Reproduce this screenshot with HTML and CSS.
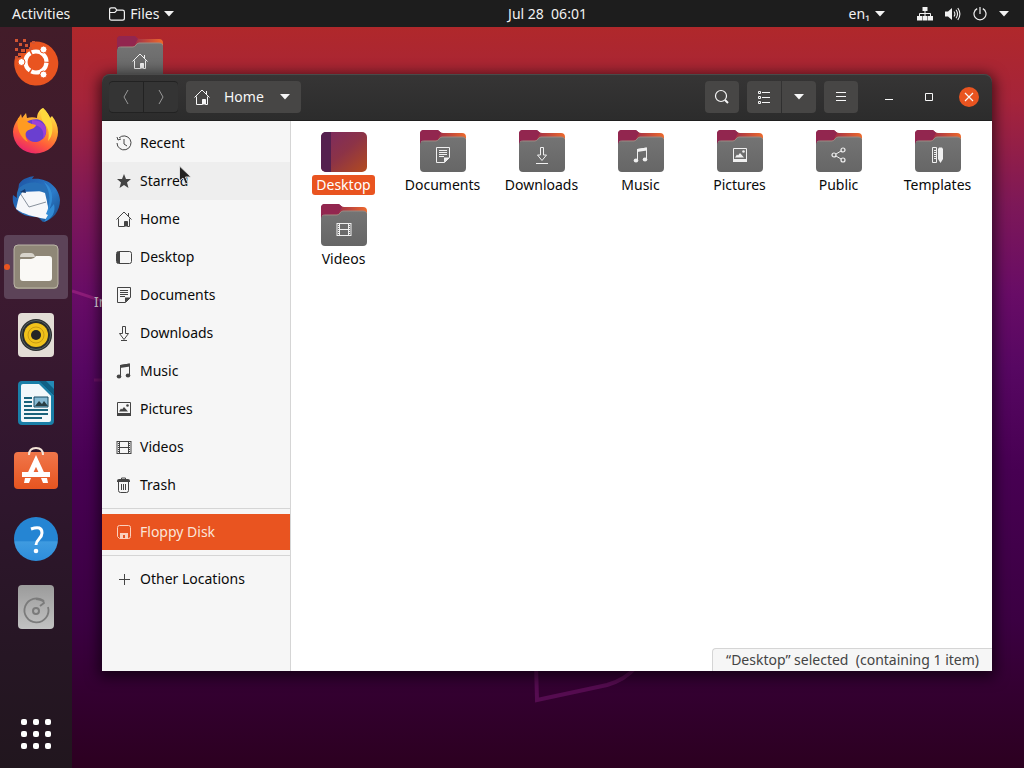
FILE: index.html
```html
<!DOCTYPE html>
<html lang="en">

<head>
    <meta charset="UTF-8">
    <meta name="viewport" content="width=device-width, initial-scale=1">
    <title>Files</title>
    <link rel="stylesheet" href="styles.css">
</head>

<body>

<!-- Shared icons -->
<svg class="defs" width="0" height="0" aria-hidden="true">
    <defs>
        <linearGradient id="folderBack" x1="0" x2="1"><stop offset="0" stop-color="#8c2450"/><stop offset=".45" stop-color="#a83545"/><stop offset="1" stop-color="#ee6a2c"/></linearGradient>
        <linearGradient id="folderFront" x1="0" x2="0" y1="0" y2="1"><stop offset="0" stop-color="#747474"/><stop offset="1" stop-color="#666"/></linearGradient>
        <linearGradient id="deskFill" x1="0" y1="0" x2="1" y2="1"><stop offset="0" stop-color="#7b2a62"/><stop offset=".5" stop-color="#8c3347"/><stop offset="1" stop-color="#b34b1e"/></linearGradient>
        <linearGradient id="foxFill" x1=".8" y1="0" x2=".3" y2="1"><stop offset="0" stop-color="#fff44f"/><stop offset=".4" stop-color="#ffa02e"/><stop offset=".7" stop-color="#ff5a3c"/><stop offset="1" stop-color="#e8216f"/></linearGradient>
        <linearGradient id="birdFill" x1="0" y1="0" x2="1" y2="1"><stop offset="0" stop-color="#1d4f9e"/><stop offset=".6" stop-color="#2b7bc9"/><stop offset="1" stop-color="#174682"/></linearGradient>
        <linearGradient id="bagFill" x1="0" x2="0" y1="0" y2="1"><stop offset="0" stop-color="#f0764a"/><stop offset="1" stop-color="#e65420"/></linearGradient>
        <linearGradient id="helpFill" x1="0" x2="0" y1="0" y2="1"><stop offset="0" stop-color="#2585d3"/><stop offset=".55" stop-color="#2585d3"/><stop offset=".56" stop-color="#3f9be0"/><stop offset="1" stop-color="#2d8ddb"/></linearGradient>
        <linearGradient id="diskFill" x1="0" x2="0" y1="0" y2="1"><stop offset="0" stop-color="#9b9b9b"/><stop offset="1" stop-color="#c2c2c2"/></linearGradient>
    </defs>

    <symbol id="folder" viewBox="0 0 48 48">
        <path d="M1 7a4 4 0 0 1 4-4h13c2 0 3 3 6 3h19a4 4 0 0 1 4 4v12H1z" fill="url(#folderBack)"/>
        <path d="M1 7a4 4 0 0 1 4-4h13c2 0 3 2 4 3-2 2-2 7-5 7H1z" fill="#92264f"/>
        <path d="M1 18a4 4 0 0 1 4-4h12c3 0 3-4 6-4h20a4 4 0 0 1 4 3v28a4 4 0 0 1-4 4H5a4 4 0 0 1-4-4z" fill="url(#folderFront)"/>
        <path d="M2 15c1-1 2-1 3-1h12c3 0 3-4 6-4h20c2 0 3 1 4 2" fill="none" stroke="#9a8a84"/>
    </symbol>
    <symbol id="home" viewBox="0 0 16 16">
        <path d="M.5 8.500 8 1l7.500 7.500M12.500 2v3.500M2.500 7.500v8h6v-5h3v5h2v-8" fill="none" stroke="currentColor"/>
        <path d="M8.500 10.500h3v5h-3z" fill="currentColor"/>
    </symbol>
    <symbol id="document" viewBox="0 0 16 16">
        <path d="M1.500.5h13v10l-5 5h-8zM4 3.500h8M4 5.500h8M4 7.500h8M4 9.500h5" fill="none" stroke="currentColor"/>
        <path d="M9 10.500h5.500l-5.500 5z" fill="currentColor"/>
    </symbol>
    <symbol id="music" viewBox="0 0 16 16">
        <path d="M4.500 13V2.500l9-1.500v11" fill="none" stroke="currentColor"/>
        <path d="M4 2l10-1.500v3L4 5z" fill="currentColor"/>
        <ellipse cx="3" cy="13.500" rx="2.300" ry="2" fill="currentColor"/><ellipse cx="12" cy="12.500" rx="2.300" ry="2" fill="currentColor"/>
    </symbol>
    <symbol id="picture" viewBox="0 0 16 16">
        <path d="M1.500 1.500h13v13h-13z" fill="none" stroke="currentColor"/>
        <path d="M1 12h14v3H1zM3 10.500l2-3 1 1L8 6l4 4.500z" fill="currentColor"/><circle cx="11.500" cy="4.500" r="1.300" fill="currentColor"/>
    </symbol>
    <symbol id="video" viewBox="0 0 16 16">
        <path d="M3.500 2v13M12.500 2v13M1 2.500h14M3.500 8.500h9M1 14.500h14" fill="none" stroke="currentColor"/>
        <path d="M1 2v13M15 2v13" fill="none" stroke="currentColor" stroke-width="1"/>
        <path d="M2.500 4v10M13.500 4v10" fill="none" stroke="currentColor" stroke-dasharray="1 1"/>
    </symbol>
    <symbol id="share" viewBox="0 0 16 16">
        <path d="M5 7l5-3M5 9l5 3" fill="none" stroke="currentColor"/>
        <g fill="none" stroke="currentColor" stroke-width="1.200"><circle cx="3" cy="8" r="2"/><circle cx="12" cy="3" r="2"/><circle cx="12" cy="13" r="2"/></g>
    </symbol>
    <symbol id="template" viewBox="0 0 16 16">
        <path d="M2.500.5h4v15h-4zM4 3.500h2M4 5.500h2M4 7.500h2M4 9.500h2M4 11.500h2" fill="none" stroke="currentColor"/>
        <path d="M8 2l1-1.500h3l1 1.500v10l-2.500 4L8 12z" fill="currentColor"/>
    </symbol>
    <symbol id="caret" viewBox="0 0 10 6">
        <path d="M0 0h10L5 5.500z" fill="currentColor"/>
    </symbol>
</svg>

<!-- Top bar -->
<header class="topbar">
    <div class="topbar-left">
        <button class="panel-btn">Activities</button>
        <button class="panel-btn app-menu">
            <svg width="16" height="14" viewBox="0 0 16 14"><path d="M.6 11V2.500Q.6.8 2.300.8H6l2 2.400h5.500q1.900 0 1.900 1.800v6.200q0 1.900-1.900 1.900h-11Q.6 13.100.6 11zM.8 5.500h5L8 3.200" fill="none" stroke="currentColor" stroke-width="1.200"/></svg>
            Files
            <svg class="caret"><use href="#caret"/></svg>
        </button>
    </div>
    <button class="panel-btn clock">Jul 28&nbsp; 06:01</button>
    <div class="topbar-right">
        <button class="panel-btn lang">en₁ <svg class="caret"><use href="#caret"/></svg></button>
        <button class="panel-btn system" aria-label="System">
            <svg width="16" height="14" viewBox="0 0 16 14"><path d="M5.500 0h5v4h-5zM0 9h5v4.500H0zM5.500 9h5v4.500h-5zM11 9h5v4.500h-5z" fill="currentColor"/><path d="M8 4v5M2.500 9V6.500h11V9" fill="none" stroke="currentColor"/></svg>
            <svg width="16" height="14" viewBox="0 0 16 14"><path d="M0 4.500h3L7 1v12L3 9.500H0z" fill="currentColor"/><path d="M9 4.500q1.800 2.500 0 5M11 2.800q3 4.200 0 8.400M12.800 1q4.200 6 0 12" fill="none" stroke="currentColor" stroke-width="1.100"/></svg>
            <svg width="14" height="14" viewBox="0 0 14 14"><path d="M4.200 1.600a6 6 0 1 0 5.600 0M7 0v7" fill="none" stroke="currentColor" stroke-width="1.200"/></svg>
            <svg class="caret"><use href="#caret"/></svg>
        </button>
    </div>
</header>

<div class="workspace">

    <!-- Dock -->
    <nav class="dock">
        <button class="dock-item" aria-label="Install Ubuntu">
            <svg viewBox="0 2 48 48">
                <path d="M18 5.500A22 22 0 1 1 3 21l6-1v-4h5v-4h4z" fill="#e95420"/>
                <path d="M3 2h3v3H3zM11 2h3v3h-3zM7 6h3v3H7zM13 7h3v3h-3zM20 4h3v3h-3zM3 11h3v3H3zM9 12h4v3H9zM6 16h3v3H6zM17 10h3v3h-3zM3 19h3v3H3z" fill="#d35432"/>
                <circle cx="24" cy="25" r="10.500" fill="none" stroke="#fff" stroke-width="4.200" stroke-dasharray="20.500 1.500" stroke-dashoffset="-.8"/>
                <g fill="#fff" stroke="#e95420"><circle cx="9.500" cy="25" r="3.500"/><circle cx="31.500" cy="12.500" r="3.500"/><circle cx="31.500" cy="37.500" r="3.500"/></g>
            </svg>
        </button>
        <button class="dock-item" aria-label="Firefox">
            <svg viewBox="0 0 48 48">
                <path d="M31 1c4 4 6 7 7 10l2-2c4 5 6 10 6 16a22.500 21.500 0 0 1-45 0c0-5 2-9 5-13l3-5 1 4 4-5 1 5c3-1 7-1 10 0 0-4 2-8 6-10z" fill="url(#foxFill)"/>
                <path d="M15 15c4-3 14-5 18 3 4 9-2 17-10 17-7 0-12-7-9-13l10-3z" fill="#6a3fd0"/>
                <path d="M20 13q9 0 13 6c2 5 1 9-2 13 2-8-2-14-11-14z" fill="#9a42d8"/>
                <path d="M6 11c4-1 6 1 9 4 3 2 7 2 9 3-1 4-6 4-9 6-3 3-1 8 1 11C8 31 4 20 6 11z" fill="#ff9b22"/>
                <path d="M31 1c4 4 6 7 7 10 4 8 3 18-2 23 2-8 0-14-4-18-3-4-4-9-1-15z" fill="#ffd83d"/>
            </svg>
        </button>
        <button class="dock-item" aria-label="Thunderbird">
            <svg viewBox="0 0 48 48">
                <path d="M7 9C11 3 17 2 22 1l-2 3C35 2 47 12 48 25c0 11-7 20-17 22l-5-5C9 42-1 34 1 20l4 3z" fill="url(#birdFill)"/>
                <path d="M8 17l26-1 3 24-3 4C22 42 11 39 4 34z" fill="#f6f7fa"/>
                <path d="M8 18l9 14 17-5" fill="none" stroke="#88919d"/>
                <path d="M7 13c9-8 23-7 29 1 4 7 4 15 1 21l-4-17q-10-5-22-2l-6 9q-1-8 2-12z" fill="#2870b7"/>
                <path d="M32 7c8 5 11 16 5 28l5-6c2 8-2 15-10 18l4-7-2-1c5-11 5-22-2-32z" fill="#328bd5"/>
                <path d="M8 17l5-3 1 4z" fill="#173a6d"/>
            </svg>
        </button>
        <button class="dock-item active" aria-label="Files">
            <svg viewBox="0 0 48 48">
                <rect x="2" y="2" width="44" height="44" rx="4" fill="#8f8777"/><rect x="2" y="2" width="44" height="43" rx="4" fill="none" stroke="#bbb5a7"/>
                <path d="M8 14q0-4 4-4h7q3 0 4 4z" fill="#d8d4cb"/>
                <path d="M8 17q0-1 1-1h10q3 0 5-3h13q3 0 3 3v19q0 3-3 3H11q-3 0-3-3z" fill="#faf9f6"/>
            </svg>
        </button>
        <button class="dock-item" aria-label="Rhythmbox">
            <svg viewBox="0 0 48 48">
                <rect x="6" y="2" width="36" height="44" rx="4" fill="#e3ddd6"/>
                <circle cx="24" cy="24" r="16" fill="#2b2e2d"/><circle cx="24" cy="24" r="14.500" fill="none" stroke="#536065"/>
                <circle cx="24" cy="24" r="12" fill="#f0c21b"/><circle cx="24" cy="24" r="8" fill="none" stroke="#c99b14"/><circle cx="24" cy="24" r="5" fill="#262626"/>
            </svg>
        </button>
        <button class="dock-item" aria-label="LibreOffice Writer">
            <svg viewBox="0 0 48 48">
                <path d="M6 6q0-4 4-4h18l14 14v26q0 4-4 4H10q-4 0-4-4z" fill="#1a7fa8"/>
                <path d="M9 7q0-2 2-2h16l12 12v24q0 2-2 2H11q-2 0-2-2z" fill="#f2f8fb"/>
                <path d="M27 2h15v14z" fill="#0f5f85"/><path d="M34 2h8v8z" fill="#238ab6"/>
                <path d="M12 19h8M12 23h8M12 27h8M12 31h24M12 35h24M12 39h18" stroke="#19637c" stroke-width="2"/>
                <path d="M22 18h14v10H22z" fill="#86b9d3" stroke="#174d65"/><path d="M23 27l4-5 3 3 2-3 4 5z" fill="#293f45"/>
            </svg>
        </button>
        <button class="dock-item" aria-label="Ubuntu Software">
            <svg viewBox="0 0 48 48">
                <rect x="2" y="5" width="44" height="37" rx="4" fill="url(#bagFill)"/>
                <path d="M17 8q0-7 7-7t7 7" fill="none" stroke="#f5e4d7" stroke-width="2"/>
                <path d="M17 29l7-15 7 15" fill="none" stroke="#fff" stroke-width="5"/>
                <path d="M10 25h28v5H10z" fill="#fff"/><path d="M13 31l-1 5h5l2-5zM29 31l2 5h5l-1-5z" fill="#fff"/>
            </svg>
        </button>
        <button class="dock-item" aria-label="Help">
            <svg viewBox="0 0 48 48">
                <circle cx="24" cy="24" r="22" fill="url(#helpFill)"/>
                <path d="M19 14q11-4 11 4c0 6-6 6-6 12" fill="none" stroke="#fff" stroke-width="3"/><circle cx="24" cy="36" r="2.300" fill="#fff"/>
            </svg>
        </button>
        <button class="dock-item" aria-label="Floppy Disk">
            <svg viewBox="0 0 48 48">
                <rect x="6" y="2" width="36" height="44" rx="4" fill="url(#diskFill)"/>
                <path d="M32 18a12 12 0 1 0 4 6M24 16q8 1 8 4l-4 3" fill="none" stroke="#7b7b7b" stroke-width="1.800"/><circle cx="24" cy="28" r="3" fill="none" stroke="#7b7b7b" stroke-width="2"/>
            </svg>
        </button>
        <button class="dock-item apps" aria-label="Show Applications">
            <svg viewBox="0 0 48 48" fill="#fff"><rect x="9" y="9" width="6" height="6" rx="2"/><rect x="21" y="9" width="6" height="6" rx="2"/><rect x="33" y="9" width="6" height="6" rx="2"/><rect x="9" y="21" width="6" height="6" rx="2"/><rect x="21" y="21" width="6" height="6" rx="2"/><rect x="33" y="21" width="6" height="6" rx="2"/><rect x="9" y="33" width="6" height="6" rx="2"/><rect x="21" y="33" width="6" height="6" rx="2"/><rect x="33" y="33" width="6" height="6" rx="2"/></svg>
        </button>
    </nav>

    <main class="desktop">
        <svg class="wallpaper" width="952" height="741" viewBox="0 0 952 741" aria-hidden="true">
            <path d="M0 264l40 13" fill="none" stroke="#8c1c78" stroke-width="3"/>
            <path d="M22 353h20" fill="none" stroke="#6c1068" stroke-width="3"/>
            <path d="M463 600l2 73 70-15q18-5 29-18" fill="none" stroke="#550c50" stroke-width="4"/>
        </svg>

        <div class="desktop-icon desktop-home"><svg class="folder"><use href="#folder"/></svg><svg class="emblem"><use href="#home"/></svg></div>
        <div class="desktop-icon desktop-install">In</div>

        <!-- Files window -->
        <section class="window">
            <div class="headerbar">
                <div class="btn-group nav">
                    <button class="tool-btn" aria-label="Back"><svg width="16" height="16" viewBox="0 0 16 16"><path d="M10 1L6 8l4 7" fill="none" stroke="currentColor"/></svg></button>
                    <button class="tool-btn" aria-label="Forward"><svg width="16" height="16" viewBox="0 0 16 16"><path d="M6 1l4 7-4 7" fill="none" stroke="currentColor"/></svg></button>
                </div>
                <button class="tool-btn path-btn"><svg class="icon"><use href="#home"/></svg><span>Home</span><svg class="caret"><use href="#caret"/></svg></button>
                <div class="tools">
                    <button class="tool-btn" aria-label="Search"><svg width="16" height="16" viewBox="0 0 16 16"><circle cx="7" cy="7" r="5.500" fill="none" stroke="currentColor" stroke-width="1.200"/><path d="M11 11l3 3" stroke="currentColor" stroke-width="2"/></svg></button>
                    <div class="btn-group">
                        <button class="tool-btn" aria-label="List view"><svg width="16" height="16" viewBox="0 0 16 16"><path d="M2.500 2.500h2v2h-2zM2.500 7.500h2v2h-2zM2.500 12.500h2v2h-2zM6 3.500h8M6 8.500h8M6 13.500h8" fill="none" stroke="currentColor"/></svg></button>
                        <button class="tool-btn" aria-label="View options"><svg class="caret"><use href="#caret"/></svg></button>
                    </div>
                    <button class="tool-btn" aria-label="Menu"><svg width="16" height="16" viewBox="0 0 16 16"><path d="M3 3.500h10M3 7.500h10M3 11.500h10" stroke="currentColor"/></svg></button>
                </div>
                <div class="window-controls">
                    <button aria-label="Minimize"><svg width="16" height="16" viewBox="0 0 16 16"><path d="M4 10.500h8" stroke="currentColor"/></svg></button>
                    <button aria-label="Maximize"><svg width="16" height="16" viewBox="0 0 16 16"><path d="M4.500 4.500h7v7h-7z" fill="none" stroke="currentColor"/></svg></button>
                    <button aria-label="Close"><svg width="20" height="20" viewBox="0 0 20 20"><circle cx="10" cy="10" r="10" fill="#e95420"/><path d="M6 6l8 8M14 6l-8 8" stroke="currentColor" stroke-width="1.200"/></svg></button>
                </div>
            </div>

            <div class="window-body">
                <nav class="sidebar">
                    <a href="#"><svg class="icon" viewBox="0 0 16 16"><path d="M3 3a7 7 0 1 1-2 5M8 4v5l3 2M1 2l1 3 3-1" fill="none" stroke="currentColor"/></svg>Recent</a>
                    <a href="#" class="hover"><svg class="icon" viewBox="0 0 16 16"><path d="M8 1l2 5h5l-4 3.500 1.500 5.500L8 12l-4.500 3L5 9.500 1 6h5z" fill="currentColor"/></svg>Starred</a>
                    <a href="#"><svg class="icon"><use href="#home"/></svg>Home</a>
                    <a href="#"><svg class="icon" viewBox="0 0 16 16"><rect x=".5" y="2.500" width="15" height="12" rx="2" fill="none" stroke="currentColor"/><path d="M1 3h3v11H1z" fill="currentColor"/></svg>Desktop</a>
                    <a href="#"><svg class="icon"><use href="#document"/></svg>Documents</a>
                    <a href="#"><svg class="icon" viewBox="0 0 16 16"><path d="M6.500 1.500h3v7h3L8 14.500 3.500 8.500h3zM5 15.500h6" fill="none" stroke="currentColor"/></svg>Downloads</a>
                    <a href="#"><svg class="icon"><use href="#music"/></svg>Music</a>
                    <a href="#"><svg class="icon"><use href="#picture"/></svg>Pictures</a>
                    <a href="#"><svg class="icon"><use href="#video"/></svg>Videos</a>
                    <a href="#"><svg class="icon" viewBox="0 0 16 16"><path d="M2.500 5v8.500q0 2 2 2h6q2 0 2-2V5M5.500 7v6M7.500 7v6M9.500 7v6M5.500 3V1h4v2" fill="none" stroke="currentColor"/><path d="M1 4q0-2 2-2h9q2 0 2 2v1H1z" fill="currentColor"/></svg>Trash</a>
                    <hr>
                    <a href="#" class="active"><svg class="icon" viewBox="0 0 16 16"><path d="M3.500 1.500h9q2 0 2 2v9q0 2-2 2h-9l-2-2v-9q0-2 2-2z" fill="none" stroke="currentColor"/><path d="M4 9h8v5H9v-3H7v3H4z" fill="currentColor"/></svg>Floppy Disk</a>
                    <hr>
                    <a href="#"><svg class="icon" viewBox="0 0 16 16"><path d="M8.500 3v11M3 8.500h11" stroke="currentColor"/></svg>Other Locations</a>
                </nav>

                <div class="files">
                    <button class="file selected">
                        <svg class="folder" viewBox="0 0 48 48"><rect x="1" y="5" width="46" height="40" rx="5" fill="url(#deskFill)"/><path d="M6 5h5v40H6a5 5 0 0 1-5-5V10a5 5 0 0 1 5-5z" fill="#54204e"/></svg>
                        <span>Desktop</span>
                    </button>
                    <button class="file"><svg class="folder"><use href="#folder"/></svg><svg class="emblem"><use href="#document"/></svg><span>Documents</span></button>
                    <button class="file"><svg class="folder"><use href="#folder"/></svg><svg class="emblem" viewBox="0 0 16 16"><path d="M6.500 0.500h3v7.500h3L8 13.500 3.500 8h3zM2 16.500h12" fill="none" stroke="currentColor"/></svg><span>Downloads</span></button>
                    <button class="file"><svg class="folder"><use href="#folder"/></svg><svg class="emblem"><use href="#music"/></svg><span>Music</span></button>
                    <button class="file"><svg class="folder"><use href="#folder"/></svg><svg class="emblem"><use href="#picture"/></svg><span>Pictures</span></button>
                    <button class="file"><svg class="folder"><use href="#folder"/></svg><svg class="emblem"><use href="#share"/></svg><span>Public</span></button>
                    <button class="file"><svg class="folder"><use href="#folder"/></svg><svg class="emblem"><use href="#template"/></svg><span>Templates</span></button>
                    <button class="file"><svg class="folder"><use href="#folder"/></svg><svg class="emblem"><use href="#video"/></svg><span>Videos</span></button>
                </div>
                <div class="statusbar">“Desktop” selected&nbsp; (containing 1 item)</div>
            </div>
        </section>
    </main>
</div>

<!-- Mouse pointer -->
<svg class="pointer" width="14" height="20" viewBox="0 0 14 20" aria-hidden="true"><path d="M.5 1v15l3.500-3 2.500 6 2.500-1-2.500-6H12z" fill="#222" stroke="#ddd"/></svg>

</body>

</html>
```
FILE: styles.css
```css
* {
    box-sizing: border-box;
}

body {
    margin: 0;
    min-height: 100vh;
    display: flex;
    flex-direction: column;
    overflow: hidden;
    font-family: "Noto Sans", "Open Sans", sans-serif;
    font-size: 14px;
    line-height: 20px;
    color: #0a0a0a;
    background-color: #2c001e;
}

button {
    margin: 0;
    padding: 0;
    border: none;
    background: none;
    font: inherit;
    color: inherit;
}

svg {
    display: block;
    flex: none;
}

.defs {
    position: absolute;
}

.icon {
    width: 16px;
    height: 16px;
}

.caret {
    width: 10px;
    height: 6px;
}

/* TOP BAR */
.topbar {
    display: flex;
    height: 27px;
    padding: 0 15px 0 12px;
    background-color: #1d1d1d;
    color: #f2f2f2;
}

.topbar-left {
    flex: 1 1 74px;
    display: flex;
    gap: 39px;
}

.topbar-right {
    flex: 1 1 0;
    display: flex;
    justify-content: flex-end;
    gap: 32px;
}

.panel-btn {
    display: flex;
    align-items: center;
    gap: 5px;
}

.system {
    gap: 12px;
}

/* DOCK */
.workspace {
    flex: 1;
    display: flex;
}

.dock {
    width: 72px;
    padding: 4px 4px 2px;
    display: flex;
    flex-direction: column;
    gap: 4px;
    background: linear-gradient(#421c29, #3c1a30 35%, #30162e 60%, #261624 85%, #21161e);
}

.dock-item {
    position: relative;
    width: 64px;
    height: 64px;
    display: flex;
    align-items: center;
    justify-content: center;
    border-radius: 4px;
}

.dock-item svg {
    width: 48px;
    height: 48px;
}

.dock-item.active {
    background-color: #5c4358;
}

.dock-item.active::before {
    content: "";
    position: absolute;
    left: 0;
    top: 29px;
    width: 6px;
    height: 6px;
    border-radius: 50%;
    background-color: #e95420;
}

.apps {
    margin-top: auto;
}

/* DESKTOP */
.desktop {
    position: relative;
    flex: 1;
    background: linear-gradient(#b0282b, #a5243a 10%, #7d1858 24%, #680c66 36%, #570762 46%, #470052 60%, #3b0042 80%, #330030 90%, #2c0020);
}

.wallpaper {
    position: absolute;
    left: 0;
    top: 0;
}

.folder {
    width: 48px;
    height: 48px;
}

.emblem {
    position: absolute;
    top: 20px;
    width: 16px;
    height: 16px;
    overflow: visible;
    color: #f0f0f0;
}

.desktop-icon {
    position: absolute;
    color: #e8dce8;
}

.desktop-home {
    left: 44px;
    top: 6px;
    display: flex;
    justify-content: center;
}

.desktop-install {
    left: 22px;
    top: 265px;
}

/* WINDOW */
.window {
    position: absolute;
    left: 30px;
    right: 32px;
    top: 47px;
    bottom: 97px;
    display: flex;
    flex-direction: column;
    border-radius: 8px 8px 0 0;
    box-shadow: 0 3px 14px 3px rgba(0, 0, 0, 0.6);
}

.headerbar {
    display: flex;
    align-items: center;
    height: 47px;
    padding: 0 3px 0 7px;
    border-bottom: 1px solid #1f1f1f;
    border-radius: 8px 8px 0 0;
    background: linear-gradient(#363535, #2c2c2c);
    box-shadow: inset 0 1px #4a4a4a;
    color: #f7f7f7;
}

.tool-btn {
    width: 34px;
    height: 32px;
    display: flex;
    align-items: center;
    justify-content: center;
    border-radius: 4px;
    background-color: #474645;
}

.btn-group {
    display: flex;
    gap: 1px;
}

.btn-group .tool-btn:first-child {
    border-radius: 4px 0 0 4px;
}

.btn-group .tool-btn:last-child {
    border-radius: 0 4px 4px 0;
}

.nav {
    padding: 1px 0;
    border-radius: 4px;
    background-color: #222;
}

.nav .tool-btn {
    height: 30px;
    background-color: #343434;
    color: #999;
}

.path-btn {
    width: auto;
    gap: 14px;
    margin-left: 8px;
    padding: 0 11px 0 8px;
}

.path-btn .caret {
    margin-left: 2px;
}

.tools {
    display: flex;
    gap: 8px;
    margin-left: auto;
}

.window-controls {
    display: flex;
    margin-left: 11px;
}

.window-controls button {
    width: 40px;
    height: 32px;
    display: flex;
    align-items: center;
    justify-content: center;
}

.window-body {
    position: relative;
    flex: 1;
    display: flex;
    background-color: #fff;
}

/* SIDEBAR */
.sidebar {
    width: 189px;
    padding-top: 3px;
    border-right: 1px solid #d5d5d5;
    background-color: #f6f6f6;
}

.sidebar a {
    display: flex;
    align-items: center;
    gap: 8px;
    height: 38px;
    padding-left: 14px;
    color: #0a0a0a;
    text-decoration: none;
}

.sidebar .icon {
    color: #444;
}

.sidebar .hover {
    background-color: #eee;
}

.sidebar .active {
    height: 36px;
    margin: 5px 0;
    background-color: #e95420;
    color: #fbe4d8;
}

.sidebar .active .icon {
    color: #fbd0bd;
}

.sidebar hr {
    height: 1px;
    margin: 4px 0;
    border: none;
    background-color: #d5d5d5;
}

/* FILES */
.files {
    flex: 1;
    display: grid;
    grid-template-columns: repeat(auto-fill, 99px);
    align-content: start;
    gap: 6px 0;
    padding: 6px 0 0 3px;
}

.file {
    position: relative;
    display: flex;
    flex-direction: column;
    align-items: center;
}

.file span {
    padding: 0 4px;
    border-radius: 3px;
}

.file.selected span {
    background-color: #e95420;
    color: #fff;
}

.statusbar {
    position: absolute;
    right: 0;
    bottom: 0;
    padding: 1px 13px;
    border: 1px solid #d5d5d5;
    border-width: 1px 0 0 1px;
    border-radius: 4px 0 0 0;
    background-color: #f6f6f6;
    color: #444;
}

.pointer {
    position: absolute;
    left: 179px;
    top: 165px;
}
```
